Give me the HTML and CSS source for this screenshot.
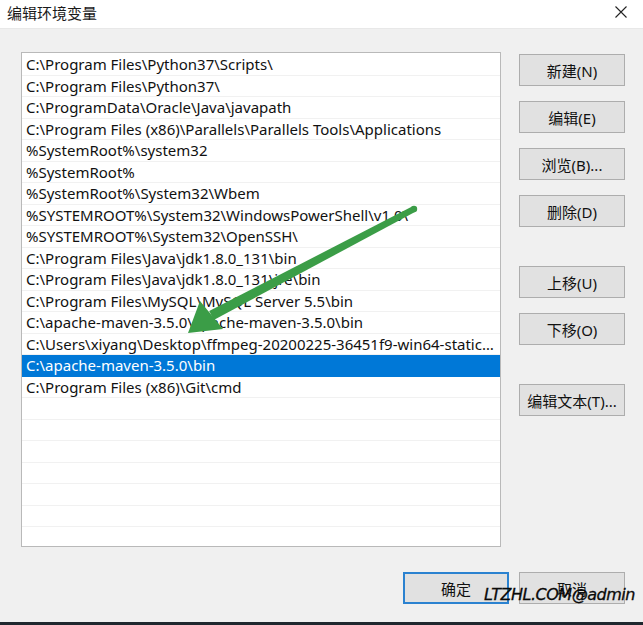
FILE: index.html
```html
<!DOCTYPE html>
<html lang="zh-CN">
<head>
  <meta charset="UTF-8" />
  <meta name="viewport" content="width=device-width, initial-scale=1.0"/>
  <title>编辑环境变量</title>
  <link rel="stylesheet" href="styles.css">
</head>
<body>
  <div class="window">
    <div class="titlebar">
      <span class="title">编辑环境变量</span>
      <span class="close">
        <svg width="12" height="12" viewBox="0 0 12 12">
          <path d="M0.5 0.5 L11.5 11.5 M11.5 0.5 L0.5 11.5" stroke="#222" stroke-width="1.1" fill="none"/>
        </svg>
      </span>
    </div>

    <div class="dialog">
      <div class="content">
        <ul class="path-list" id="pathList">
          <li>C:\Program Files\Python37\Scripts\</li>
          <li>C:\Program Files\Python37\</li>
          <li>C:\ProgramData\Oracle\Java\javapath</li>
          <li>C:\Program Files (x86)\Parallels\Parallels Tools\Applications</li>
          <li>%SystemRoot%\system32</li>
          <li>%SystemRoot%</li>
          <li>%SystemRoot%\System32\Wbem</li>
          <li>%SYSTEMROOT%\System32\WindowsPowerShell\v1.0\</li>
          <li>%SYSTEMROOT%\System32\OpenSSH\</li>
          <li>C:\Program Files\Java\jdk1.8.0_131\bin</li>
          <li>C:\Program Files\Java\jdk1.8.0_131\jre\bin</li>
          <li>C:\Program Files\MySQL\MySQL Server 5.5\bin</li>
          <li>C:\apache-maven-3.5.0\apache-maven-3.5.0\bin</li>
          <li>C:\Users\xiyang\Desktop\ffmpeg-20200225-36451f9-win64-static\bin</li>
          <li class="selected">C:\apache-maven-3.5.0\bin</li>
          <li>C:\Program Files (x86)\Git\cmd</li>
          <li></li>
          <li></li>
          <li></li>
          <li></li>
          <li></li>
          <li></li>
          <li></li>
        </ul>

        <div class="side-buttons">
          <button>新建(N)</button>
          <button>编辑(E)</button>
          <button>浏览(B)...</button>
          <button>删除(D)</button>
          <div class="spacer"></div>
          <button>上移(U)</button>
          <button>下移(O)</button>
          <div class="spacer"></div>
          <button>编辑文本(T)...</button>
        </div>
      </div>

      <div class="footer">
        <button class="default">确定</button>
        <button>取消</button>
      </div>
    </div>

    <div class="taskbar-edge"></div>

    <!-- arrow pointing at the maven entry -->
    <svg class="arrow" width="643" height="625" viewBox="0 0 643 625">
      <circle cx="414" cy="209" r="3.2" fill="#3b9d47"/>
      <polygon points="412.6,206.3 415.4,211.7 213.8,319.9 209.2,311.1" fill="#3b9d47"/>
      <polygon points="188,333 200,301 223,329" fill="#3b9d47"/>
    </svg>

    <div class="watermark">LTZHL.COM@admin</div>
  </div>

  <script>
    // click a row to select it
    document.querySelectorAll('#pathList li').forEach(function(item) {
      item.addEventListener('click', function() {
        if (!item.textContent) return;
        document.querySelectorAll('#pathList li').forEach(function(li) {
          li.classList.remove('selected');
        });
        item.classList.add('selected');
      });
    });
  </script>
</body>
</html>
```

FILE: styles.css
```css
* {
  margin: 0;
  padding: 0;
  box-sizing: border-box;
  font-family: 'Noto Sans', 'Noto Sans CJK SC', sans-serif;
}

body {
  width: 643px;
  height: 625px;
  overflow: hidden;
  background-color: #f0f0f0;
}

.window {
  position: relative;
  width: 643px;
  height: 625px;
  display: flex;
  flex-direction: column;
}

.titlebar {
  height: 29px;
  flex-shrink: 0;
  background-color: white;
  border-bottom: 1px solid #e8e8e8;
  display: flex;
  align-items: center;
  justify-content: space-between;
  padding: 0 16px 4px 7px;
}

.title {
  font-size: 15px;
  color: #1a1a1a;
}

.close {
  display: flex;
}

.dialog {
  flex-grow: 1;
  background-color: #f0f0f0;
  padding: 23px 18px 0 21px;
}

.content {
  display: flex;
  gap: 18px;
}

.path-list {
  list-style: none;
  width: 480px;
  height: 495px;
  background-color: white;
  border: 1px solid #b9b9b9;
  padding-top: 1px;
  overflow: hidden;
}

.path-list li {
  height: 21.5px;
  line-height: 20px;
  padding: 0 4px;
  font-size: 15px;
  color: #111;
  border-bottom: 1px solid #f1f1f1;
  white-space: nowrap;
  overflow: hidden;
  text-overflow: ellipsis;
}

.path-list li.selected {
  background-color: #0078d7;
  color: white;
  border-bottom-color: #0078d7;
}

.side-buttons {
  display: flex;
  flex-direction: column;
  gap: 15px;
  margin-top: 2px;
}

.spacer {
  height: 9px;
}

button {
  width: 106px;
  height: 32px;
  background-color: #e1e1e1;
  border: 1px solid #adadad;
  font-size: 15px;
  color: #111;
  cursor: pointer;
}

button:hover {
  background-color: #e5f1fb;
  border-color: #0078d7;
}

.footer {
  display: flex;
  justify-content: flex-end;
  gap: 10px;
  margin-top: 25px;
}

button.default {
  border: 2px solid #2b82d0;
}

.taskbar-edge {
  height: 3px;
  flex-shrink: 0;
  background-color: #1f272e;
}

.arrow {
  position: absolute;
  left: 0;
  top: 0;
  pointer-events: none;
}

.watermark {
  position: absolute;
  left: 484px;
  top: 585px;
  font-family: 'DejaVu Sans', sans-serif;
  font-style: italic;
  font-size: 16px;
  letter-spacing: -0.5px;
  color: #0a0a0a;
  -webkit-text-stroke: 0.3px #0a0a0a;
  pointer-events: none;
}
```
